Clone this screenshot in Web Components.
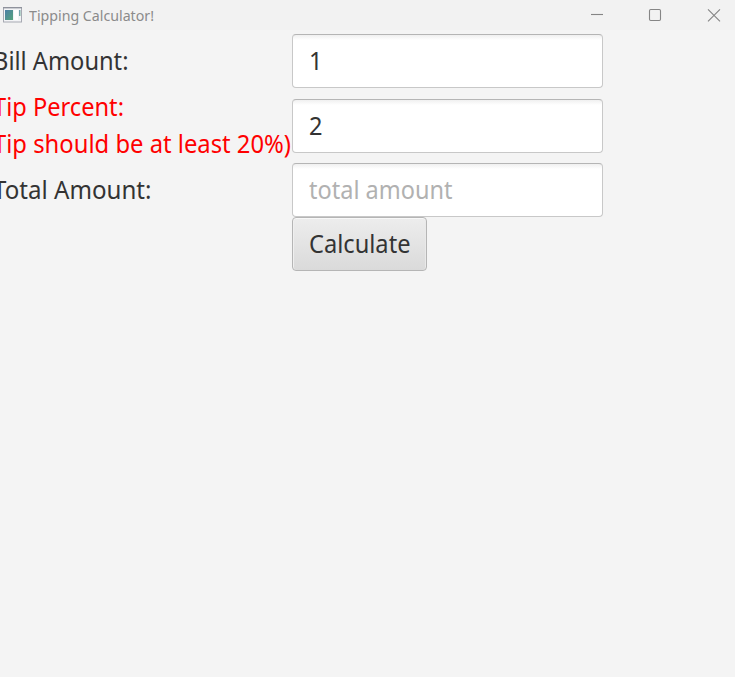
<!DOCTYPE html>
<html lang="en"><head><meta charset="utf-8"><title>Tipping Calculator!</title>
<style>html,body{margin:0;height:100%;overflow:hidden;background:#f4f4f4}</style></head>
<body><tip-window></tip-window>
<script>
// Text run scaled to an exact advance width.
class FitText extends HTMLElement{
  connectedCallback(){
    const root=this.attachShadow({mode:'open'});
    root.innerHTML='<style>:host{display:block;white-space:pre}span{display:inline-block;transform-origin:0 50%}</style><span></span>';
    const s=root.querySelector('span');
    s.textContent=this.getAttribute('text');
    const w=+this.getAttribute('width');
    s.style.transform='scaleX('+w/s.getBoundingClientRect().width+')';
    this.style.width=w+'px';
  }
}
class TitleBar extends HTMLElement{
  connectedCallback(){
    this.attachShadow({mode:'open'}).innerHTML=`<style>
    :host{display:flex;height:30px;background:#f2f2f2;color:#8b8b8b;align-items:center;font-size:14px;line-height:20px}
    svg{display:block;flex:none}.app{margin:0 6px 0 3px}fit-text{padding-top:2px}
    .controls{margin-left:auto}</style>
    <svg class="app" width="20" height="16" viewBox="0 0 20 16">
      <defs><linearGradient id="g" x1="0" y1="0" x2="1" y2="1"><stop stop-color="#4c7fa6"/><stop offset="1" stop-color="#55a47c"/></linearGradient></defs>
      <rect x=".5" y=".5" width="18" height="14.5" fill="#f3f4f6" stroke="#a6a9b2"/>
      <path d="M0 .7h19" stroke="#8f929c" stroke-width="1.4"/>
      <rect x="2" y="3" width="8" height="10" fill="url(#g)"/>
      <rect x="11" y="3" width="4" height="10" fill="#fff"/>
      <rect x="16" y="3" width="1.5" height="6" fill="url(#g)" opacity=".75"/>
    </svg>
    <fit-text text="Tipping Calculator!" width="125"></fit-text>
    <svg class="controls" width="150" height="30" fill="none" stroke="#858585" stroke-width="1.1">
      <path d="M6 14.5h12"/><rect x="64.5" y="9.5" width="11" height="11" rx="1.2"/>
      <path d="M123 9.3l12 12M135 9.3l-12 12"/>
    </svg>`;
  }
}
class FormLabel extends HTMLElement{
  connectedCallback(){
    this.attachShadow({mode:'open'}).innerHTML='<style>:host{display:block;margin-left:-7px;padding-bottom:2px;line-height:37px;color:#333}:host([error]){color:#f00}</style><slot></slot>';
  }
}
class TextField extends HTMLElement{
  connectedCallback(){
    this.attachShadow({mode:'open'}).innerHTML=`<style>
    :host{display:flex;box-sizing:border-box;width:311px;height:54px;align-items:center;padding:0 0 2px 15.5px;border:1px solid #c8c8c8;border-top-color:#b5b5b5;border-radius:4px;background:linear-gradient(#f0f0f0,#fff 5px);color:#333;line-height:37px}
    :host([placeholder]){color:#b1b1b1}</style><slot></slot>`;
  }
}
class PushButton extends HTMLElement{
  connectedCallback(){
    this.attachShadow({mode:'open'}).innerHTML=`<style>
    :host{display:flex;box-sizing:border-box;width:135px;height:54px;align-items:center;padding:0 0 2px 15.5px;border:1px solid #b5b5b5;border-radius:4px;background:linear-gradient(#ededed,#dadada);box-shadow:inset 0 1px #f8f8f8,inset 1px 0 #efefef,inset -1px 0 #e9e9e9;color:#333;line-height:37px}</style><slot></slot>`;
  }
}
class TipWindow extends HTMLElement{
  connectedCallback(){
    this.attachShadow({mode:'open'}).innerHTML=`<style>
    :host{display:block;width:735px;height:677px;overflow:hidden;background:#f4f4f4;font:25px "Noto Sans","Open Sans",sans-serif}
    .form{display:grid;grid-template-columns:292px 311px;grid-template-rows:54px 76px 54px 54px;align-items:center;padding-top:4px}
    push-button{grid-column:2}
    .form{row-gap:0}
    form-label[error]{margin-top:1px}
    .form{grid-template-rows:54px 75px 54px 54px}
    text-field.tip{margin-top:1px}
    </style><title-bar></title-bar><div class="form">
    <form-label><fit-text text="Bill Amount:" width="135.5"></fit-text></form-label><text-field><fit-text text="1" width="13.5"></fit-text></text-field>
    <form-label error><fit-text text="Tip Percent:" width="131"></fit-text><fit-text text="Tip should be at least 20%)" width="298"></fit-text></form-label><text-field class="tip"><fit-text text="2" width="13.5"></fit-text></text-field>
    <form-label><fit-text text="Total Amount:" width="158.5"></fit-text></form-label><text-field placeholder><fit-text text="total amount" width="143.5"></fit-text></text-field>
    <push-button><fit-text text="Calculate" width="101.5"></fit-text></push-button></div>`;
  }
}
customElements.define('fit-text',FitText);
customElements.define('title-bar',TitleBar);
customElements.define('form-label',FormLabel);
customElements.define('text-field',TextField);
customElements.define('push-button',PushButton);
customElements.define('tip-window',TipWindow);
</script></body></html>
